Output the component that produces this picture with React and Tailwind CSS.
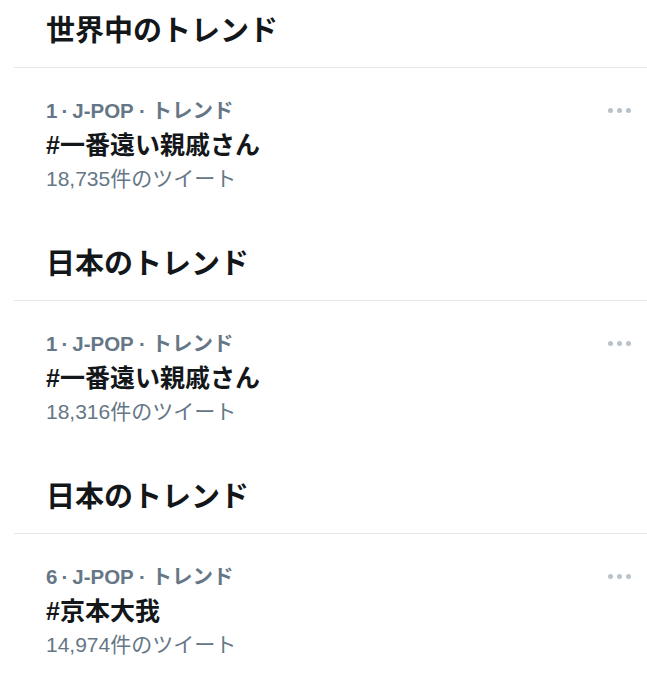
import React from 'react';

const sections = [
  { title: '世界中のトレンド', rank: 1, tag: '#一番遠い親戚さん', count: '18,735' },
  { title: '日本のトレンド', rank: 1, tag: '#一番遠い親戚さん', count: '18,316' },
  { title: '日本のトレンド', rank: 6, tag: '#京本大我', count: '14,974' },
];

const font = { fontFamily: '"Liberation Sans", "Noto Sans CJK JP", sans-serif' };

const MoreDots = () => (
  <div className="flex items-center gap-[4px] h-[32px]">
    <span className="w-[5px] h-[5px] rounded-full bg-[#b8c2ca]" />
    <span className="w-[5px] h-[5px] rounded-full bg-[#b8c2ca]" />
    <span className="w-[5px] h-[5px] rounded-full bg-[#b8c2ca]" />
  </div>
);

const TrendSection = ({ title, rank, tag, count }) => (
  <div className="h-[233px]">
    {/* section heading + hairline */}
    <div className="ml-[14px] border-b border-[#e3e8ec] pt-[12px] pb-[17px] pl-[32px]">
      <h2 className="text-[29px] leading-[38px] font-bold text-[#14171a]">{title}</h2>
    </div>

    {/* trend row */}
    <div className="flex justify-between pt-[26px] pl-[46px] pr-[16px]">
      <div>
        <div className="text-[20.5px] leading-[34px] font-bold text-[#657786]">
          {rank}<span className="mx-[4px]">·</span>J-POP · トレンド
        </div>
        <div className="text-[25px] leading-[34px] font-bold text-[#14171a]">{tag}</div>
        <div className="text-[21px] leading-[34px] text-[#657786]">{count}件のツイート</div>
      </div>
      <MoreDots />
    </div>
  </div>
);

export default function App() {
  return (
    <div className="w-[647px] h-[680px] bg-white overflow-hidden" style={font}>
      {sections.map((s, i) => (
        <TrendSection key={i} {...s} />
      ))}
    </div>
  );
}
